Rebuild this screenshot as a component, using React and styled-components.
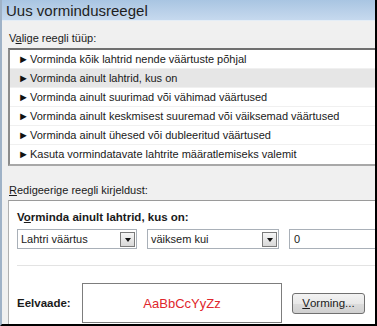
import React from "react";
import styled, { createGlobalStyle } from "styled-components";

const Global = createGlobalStyle`
  html, body { margin: 0; padding: 0; background: #f0f0f0; }
  body { font-family: "Liberation Sans", Arial, sans-serif; }
`;

const Frame = styled.div`
  width: 377px;
  height: 326px;
  box-sizing: border-box;
  background: #f0f0f0;
  border-left: 2px solid #9fb2c7;
  border-right: 2px solid #000;
  border-bottom: 2px solid #000;
  display: flex;
  flex-direction: column;
  overflow: hidden;
  font-size: 11px;
  color: #1a1a1a;
`;

const TitleBar = styled.div`
  height: 20px;
  flex: none;
  background: linear-gradient(#a9c5e2, #c6d9ee);
  border-bottom: 1px solid #e4edf6;
  padding-left: 4px;
  display: flex;
  align-items: center;
  font-size: 15px;
  color: #1e1e1e;
`;

const Body = styled.div`
  flex: 1;
  padding-left: 6px;
  display: flex;
  flex-direction: column;
`;

const Label = styled.div`
  padding-left: 1px;
  height: 14px;
  line-height: 14px;
  margin-top: ${(p) => p.$top}px;
  margin-bottom: ${(p) => p.$bottom}px;
`;

const U = styled.span`
  text-decoration: underline;
`;

const ListBox = styled.div`
  background: #fff;
  border-top: 2px solid #6f6f6f;
  border-left: 2px solid #8c8c8c;
  border-bottom: 2px solid #a8a8a8;
  display: flex;
  flex-direction: column;
`;

const Row = styled.div`
  height: 18px;
  display: flex;
  align-items: center;
  padding-left: 8px;
  border-bottom: 1px solid ${(p) => (p.$last ? "transparent" : "#f0f0f0")};
  background: ${(p) => (p.$selected ? "#e6e6e6" : "#fff")};
`;

const Arrow = styled.span`
  font-size: 11px;
  width: 12px;
  color: #111;
`;

const EditBox = styled.div`
  flex: 1;
  background: #fff;
  border-top: 1px solid #9a9a9a;
  border-left: 1px solid #b0b0b0;
  padding-left: 8px;
  display: flex;
  flex-direction: column;
`;

const Heading = styled.div`
  font-weight: bold;
  font-size: 11.5px;
  margin-top: 9px;
  height: 14px;
  line-height: 14px;
`;

const Controls = styled.div`
  display: flex;
  gap: 10px;
  margin-top: 5px;
`;

const Select = styled.div`
  width: ${(p) => p.$w}px;
  height: 20px;
  box-sizing: border-box;
  border: 1px solid #a9b0b8;
  display: flex;
  align-items: center;
  justify-content: space-between;
  padding-left: 3px;
  padding-right: 1px;
`;

const Input = styled.div`
  flex: 1;
  height: 20px;
  box-sizing: border-box;
  border: 1px solid #a9b0b8;
  border-right: none;
  display: flex;
  align-items: center;
  padding-left: 4px;
`;

const DropBtn = styled.div`
  width: 15px;
  height: 15px;
  box-sizing: border-box;
  border: 1px solid #7b7b7b;
  background: linear-gradient(#f6f6f6, #d8d8d8);
  display: flex;
  align-items: center;
  justify-content: center;
`;

const Tri = styled.div`
  width: 0;
  height: 0;
  border-left: 3.5px solid transparent;
  border-right: 3.5px solid transparent;
  border-top: 4px solid #111;
  margin-top: 1px;
`;

const Sep = styled.div`
  height: 1px;
  background: #e3e3e3;
  margin-top: 16px;
`;

const PreviewRow = styled.div`
  display: flex;
  align-items: center;
  margin-top: 17px;
`;

const PreviewLabel = styled.div`
  font-weight: bold;
  font-size: 11.5px;
  width: 65px;
`;

const PreviewBox = styled.div`
  width: 200px;
  height: 40px;
  box-sizing: border-box;
  border: 1px solid #7d7d7d;
  display: flex;
  align-items: center;
  justify-content: center;
  color: #e0262c;
  font-size: 13px;
`;

const Button = styled.div`
  margin-left: 10px;
  width: 73px;
  height: 21px;
  box-sizing: border-box;
  border: 1px solid #707070;
  border-radius: 3px;
  background: linear-gradient(#f3f3f3 0%, #e8e8e8 50%, #dcdcdc 51%, #d0d0d0 100%);
  display: flex;
  align-items: center;
  justify-content: center;
  font-size: 11.5px;
`;

const items = [
  "Vorminda kõik lahtrid nende väärtuste põhjal",
  "Vorminda ainult lahtrid, kus on",
  "Vorminda ainult suurimad või vähimad väärtused",
  "Vorminda ainult keskmisest suuremad või väiksemad väärtused",
  "Vorminda ainult ühesed või dubleeritud väärtused",
  "Kasuta vormindatavate lahtrite määratlemiseks valemit",
];

export default function App() {
  return (
    <>
      <Global />
      <Frame>
        <TitleBar>Uus vormindusreegel</TitleBar>
        <Body>
          <Label $top={10} $bottom={3}>
            V<U>a</U>lige reegli tüüp:
          </Label>
          <ListBox>
            {items.map((t, i) => (
              <Row key={i} $selected={i === 1} $last={i === items.length - 1}>
                <Arrow>►</Arrow>
                {t}
              </Row>
            ))}
          </ListBox>
          <Label $top={17} $bottom={3}>
            <U>R</U>edigeerige reegli kirjeldust:
          </Label>
          <EditBox>
            <Heading>
              V<U>o</U>rminda ainult lahtrid, kus on:
            </Heading>
            <Controls>
              <Select $w={120}>
                Lahtri väärtus
                <DropBtn>
                  <Tri />
                </DropBtn>
              </Select>
              <Select $w={132}>
                väiksem kui
                <DropBtn>
                  <Tri />
                </DropBtn>
              </Select>
              <Input>0</Input>
            </Controls>
            <Sep />
            <PreviewRow>
              <PreviewLabel>Eelvaade:</PreviewLabel>
              <PreviewBox>AaBbCcYyZz</PreviewBox>
              <Button>
                <U>V</U>orming...
              </Button>
            </PreviewRow>
          </EditBox>
        </Body>
      </Frame>
    </>
  );
}
